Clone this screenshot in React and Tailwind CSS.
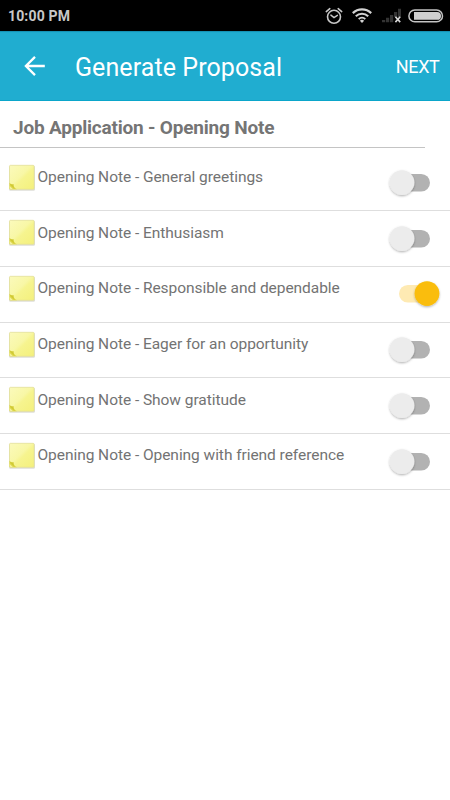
import { useState } from "react";

const notes = [
  { id: 1, label: "Opening Note - General greetings" },
  { id: 2, label: "Opening Note - Enthusiasm" },
  { id: 3, label: "Opening Note - Responsible and dependable" },
  { id: 4, label: "Opening Note - Eager for an opportunity" },
  { id: 5, label: "Opening Note - Show gratitude" },
  { id: 6, label: "Opening Note - Opening with friend reference" },
];

const AlarmIcon = () => (
  <svg width="18" height="18" viewBox="0 0 18 18" fill="none" stroke="#c8c8c8" strokeLinecap="round">
    <circle cx="9" cy="9.8" r="6.5" strokeWidth="1.6" />
    <path d="M1.3 4.6 4.8 1.7M16.7 4.6 13.2 1.7" strokeWidth="1.6" />
    <path d="M5.9 8.1 9 10.6 12.4 8.3" strokeWidth="1.4" />
  </svg>
);

const WifiIcon = () => (
  <svg width="20" height="15" viewBox="0 0 20 15" fill="none" stroke="#d2d2d2">
    <path d="M.8 5.1a13.2 13.2 0 0 1 18.4 0" strokeWidth="2.2" />
    <path d="M3.8 8.2a8.9 8.9 0 0 1 12.4 0" strokeWidth="2.1" />
    <path d="M6.7 11.1a4.9 4.9 0 0 1 6.6 0" strokeWidth="1.9" />
    <path d="M10 15 7.9 12.7a3 3 0 0 1 4.2 0z" fill="#d2d2d2" stroke="none" />
  </svg>
);

const SignalIcon = () => (
  <svg width="21" height="15" viewBox="0 0 21 15">
    <path d="M1 12h3.2v2.3H1zM5 9.8h3.2v4.5H5zM9 7h3.2v7.3H9zM13 4h3.2v5H13zM17 .8h3V9h-3z" fill="#333" />
    <path d="m14.4 8.7 4.8 5.4m0-5.4-4.8 5.4" stroke="#d8d8d8" strokeWidth="1.6" />
  </svg>
);

const BatteryIcon = () => (
  <svg width="36" height="14" viewBox="0 0 36 14">
    <rect x=".9" y="1" width="33.6" height="11.8" rx="5.9" fill="none" stroke="#c4c4c4" strokeWidth="1.5" />
    <path d="M6 3h23.1a3.9 3.9 0 0 1 0 7.8H6z" fill="#cfcfcf" />
  </svg>
);

const NoteIcon = () => (
  <svg width="28" height="28" viewBox="0 0 28 28" className="block shrink-0">
    <defs>
      <linearGradient id="note" x1="0" y1="0" x2="1" y2="1">
        <stop offset="0" stopColor="#fbfabc" />
        <stop offset=".45" stopColor="#f8f7a6" />
        <stop offset=".55" stopColor="#f6f48f" />
        <stop offset="1" stopColor="#f4f07c" />
      </linearGradient>
    </defs>
    <rect x="1" y="1.6" width="26" height="25.2" rx="1.6" fill="#a9a99c" opacity=".4" />
    <path
      d="M1.5 2.3a1 1 0 0 1 1-1h22.6a1 1 0 0 1 1 1v22a1 1 0 0 1-1 1H2.5a1 1 0 0 1-1-1z"
      fill="url(#note)"
      stroke="#e2df96"
      strokeWidth=".7"
    />
    <path d="M1.5 18.8c1.1 1.4 2.6 1.8 4 1.5-.2 2.2 1.2 4.2 3.6 5H2.5a1 1 0 0 1-1-1z" fill="#ddd74a" />
    <path d="M1.6 19.5c1.4 2.7 3.6 4.9 6.6 5.7-2.3-1-3.2-2.8-2.7-4.9-1.4.4-2.9.1-3.9-.8z" fill="#d0c935" />
    <path d="M1.7 22 4.8 25H2.5a.8.8 0 0 1-.8-.7z" fill="#f4f1a0" />
  </svg>
);

const Toggle = ({ checked, onChange, label }) => (
  <button
    type="button"
    role="switch"
    aria-checked={checked}
    aria-label={label}
    onClick={onChange}
    className="shrink-0"
  >
    <svg width="60" height="34" viewBox="0 0 60 34" className="block overflow-visible">
      <defs>
        <filter id="knob" x="-30%" y="-30%" width="160%" height="160%">
          <feDropShadow dx="0" dy="1.1" stdDeviation=".9" floodOpacity=".3" />
        </filter>
      </defs>
      <rect
        x={checked ? 9 : 10}
        y="8"
        width={checked ? 31 : 30}
        height="17.6"
        rx="8.8"
        fill={checked ? "#feeab3" : "#b2b2b2"}
      />
      <circle cx={checked ? 37 : 12} cy="16.6" r="12.4" fill={checked ? "#fabd08" : "#ececec"} filter="url(#knob)" />
    </svg>
  </button>
);

const App = () => {
  const [selected, setSelected] = useState([3]);

  const toggle = (id) =>
    setSelected((prev) => (prev.includes(id) ? prev.filter((n) => n !== id) : [...prev, id]));

  return (
    <div className="h-screen w-full overflow-hidden bg-white font-[Roboto,sans-serif]">
      <div className="flex h-[31px] items-center bg-black pl-2 pr-[6px]">
        <span className="mt-px text-[14px] font-bold leading-none tracking-[0.15px] text-[#c8c8c8]">10:00 PM</span>
        <div className="ml-auto flex items-center">
          <AlarmIcon />
          <span className="ml-[9px]">
            <WifiIcon />
          </span>
          <span className="ml-[9px]">
            <SignalIcon />
          </span>
          <span className="ml-[6px]">
            <BatteryIcon />
          </span>
        </div>
      </div>

      <header className="flex h-[70px] items-center border-b border-[#0ba6ca] bg-[#20add0] pl-6 pr-[10.5px] text-white shadow-[inset_0_2px_1px_-1px_#1590b2]">
        <svg width="22" height="20" viewBox="0 0 22 20" fill="none" stroke="#fff" strokeWidth="2.3">
          <path d="M11 .9 1.9 10 11 19.1M1.9 10H20.8" />
        </svg>
        <h1 className="ml-[29px] mt-[3px] whitespace-nowrap text-[25px] leading-none tracking-[0.08px]">
          Generate Proposal
        </h1>
        <button type="button" className="ml-auto mt-[3px] text-[18px] leading-none tracking-[-0.35px]">
          NEXT
        </button>
      </header>

      <div className="mr-[25px] flex h-[47px] items-center border-b border-[#c4c4c4] pl-[13px] pt-[6px]">
        <h2 className="whitespace-nowrap text-[19px] font-bold leading-none tracking-[-0.2px] text-[#757575]">
          Job Application - Opening Note
        </h2>
      </div>

      <ul className="pt-[7.6px]">
        {notes.map((note) => (
          <li key={note.id} className="flex h-[55.7px] items-start border-b border-[#dedede] pl-2">
            <div className="mt-[8px]">
              <NoteIcon />
            </div>
            <span className="ml-[1.5px] mt-[14.4px] whitespace-nowrap text-[15.5px] leading-none tracking-[-0.05px] text-[#737373]">
              {note.label}
            </span>
            <div className="ml-auto mt-[10.5px]">
              <Toggle
                checked={selected.includes(note.id)}
                onChange={() => toggle(note.id)}
                label={note.label}
              />
            </div>
          </li>
        ))}
      </ul>
    </div>
  );
};

export default App;
